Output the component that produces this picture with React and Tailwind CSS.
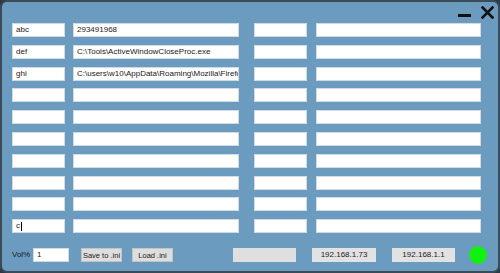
import React from 'react';

const rows = [
  ['abc', '293491968'],
  ['def', 'C:\\Tools\\ActiveWindowCloseProc.exe'],
  ['ghi', 'C:\\users\\w10\\AppData\\Roaming\\Mozilla\\Firefox\\Profiles'],
  ['', ''],
  ['', ''],
  ['', ''],
  ['', ''],
  ['', ''],
  ['', ''],
  ['c', '', true],
];

const Box = ({ className = '', children, caret }) => (
  <div
    className={`h-[14px] bg-white border border-[#d3dbe2] pl-[3px] flex items-center overflow-hidden whitespace-nowrap text-[8px] text-[#1a1a1a] ${className}`}
  >
    {children}
    {caret && <span className="inline-block w-[1px] h-[9px] bg-black ml-[1px]" />}
  </div>
);

export default function App() {
  return (
    <div
      className="w-[500px] h-[273px] bg-[#2c3944]"
      style={{ fontFamily: '"Liberation Sans", Arial, sans-serif' }}
    >
      <div className="h-full rounded-[7px] border-2 border-[#3a4a57] bg-[#6b9cc0] flex flex-col">
        {/* title controls */}
        <div className="h-[21px] flex justify-end items-start pr-[4px]">
          <div className="w-[13px] h-[3px] bg-[#111] mt-[12px]" />
          <svg className="ml-[10px] mt-[4px]" width="13" height="13" viewBox="0 0 13 13">
            <path d="M1.5 1.5 L11.5 11.5 M11.5 1.5 L1.5 11.5" stroke="#111" strokeWidth="2.6" strokeLinecap="square" />
          </svg>
        </div>

        {/* rows */}
        <div className="flex flex-col gap-[7.8px] pl-[10px]">
          {rows.map(([a, b, caret], i) => (
            <div key={i} className="flex">
              <Box className="w-[53px]" caret={caret}>{a}</Box>
              <Box className="w-[166px] ml-[8px]">{b}</Box>
              <Box className="w-[53px] ml-[15px]" />
              <Box className="w-[165px] ml-[9px]" />
            </div>
          ))}
        </div>

        {/* bottom bar */}
        <div className="flex items-center h-[14px] mt-[15px] pl-[10px] text-[8px] text-[#1a1a1a]">
          <span className="w-[21px]">Vol%</span>
          <Box className="w-[36px]">1</Box>
          <button className="ml-[12px] w-[41px] h-[14px] bg-[#dedede] border border-[#c4c4c4] text-[7.5px] whitespace-nowrap flex items-center justify-center">
            Save to .ini
          </button>
          <button className="ml-[10px] w-[41px] h-[14px] bg-[#dedede] border border-[#c4c4c4] text-[7.5px] whitespace-nowrap flex items-center justify-center">
            Load .ini
          </button>
          <div className="ml-[60px] w-[63px] h-[14px] bg-[#dfdfdf]" />
          <div className="ml-[16px] w-[64px] h-[14px] bg-[#e2e2e2] flex items-center justify-center">
            192.168.1.73
          </div>
          <div className="ml-[16px] w-[63px] h-[14px] bg-[#e2e2e2] flex items-center justify-center">
            192.168.1.1
          </div>
          <div className="ml-[14px] w-[18px] h-[18px] rounded-full bg-[#12f012]" />
        </div>
      </div>
    </div>
  );
}
